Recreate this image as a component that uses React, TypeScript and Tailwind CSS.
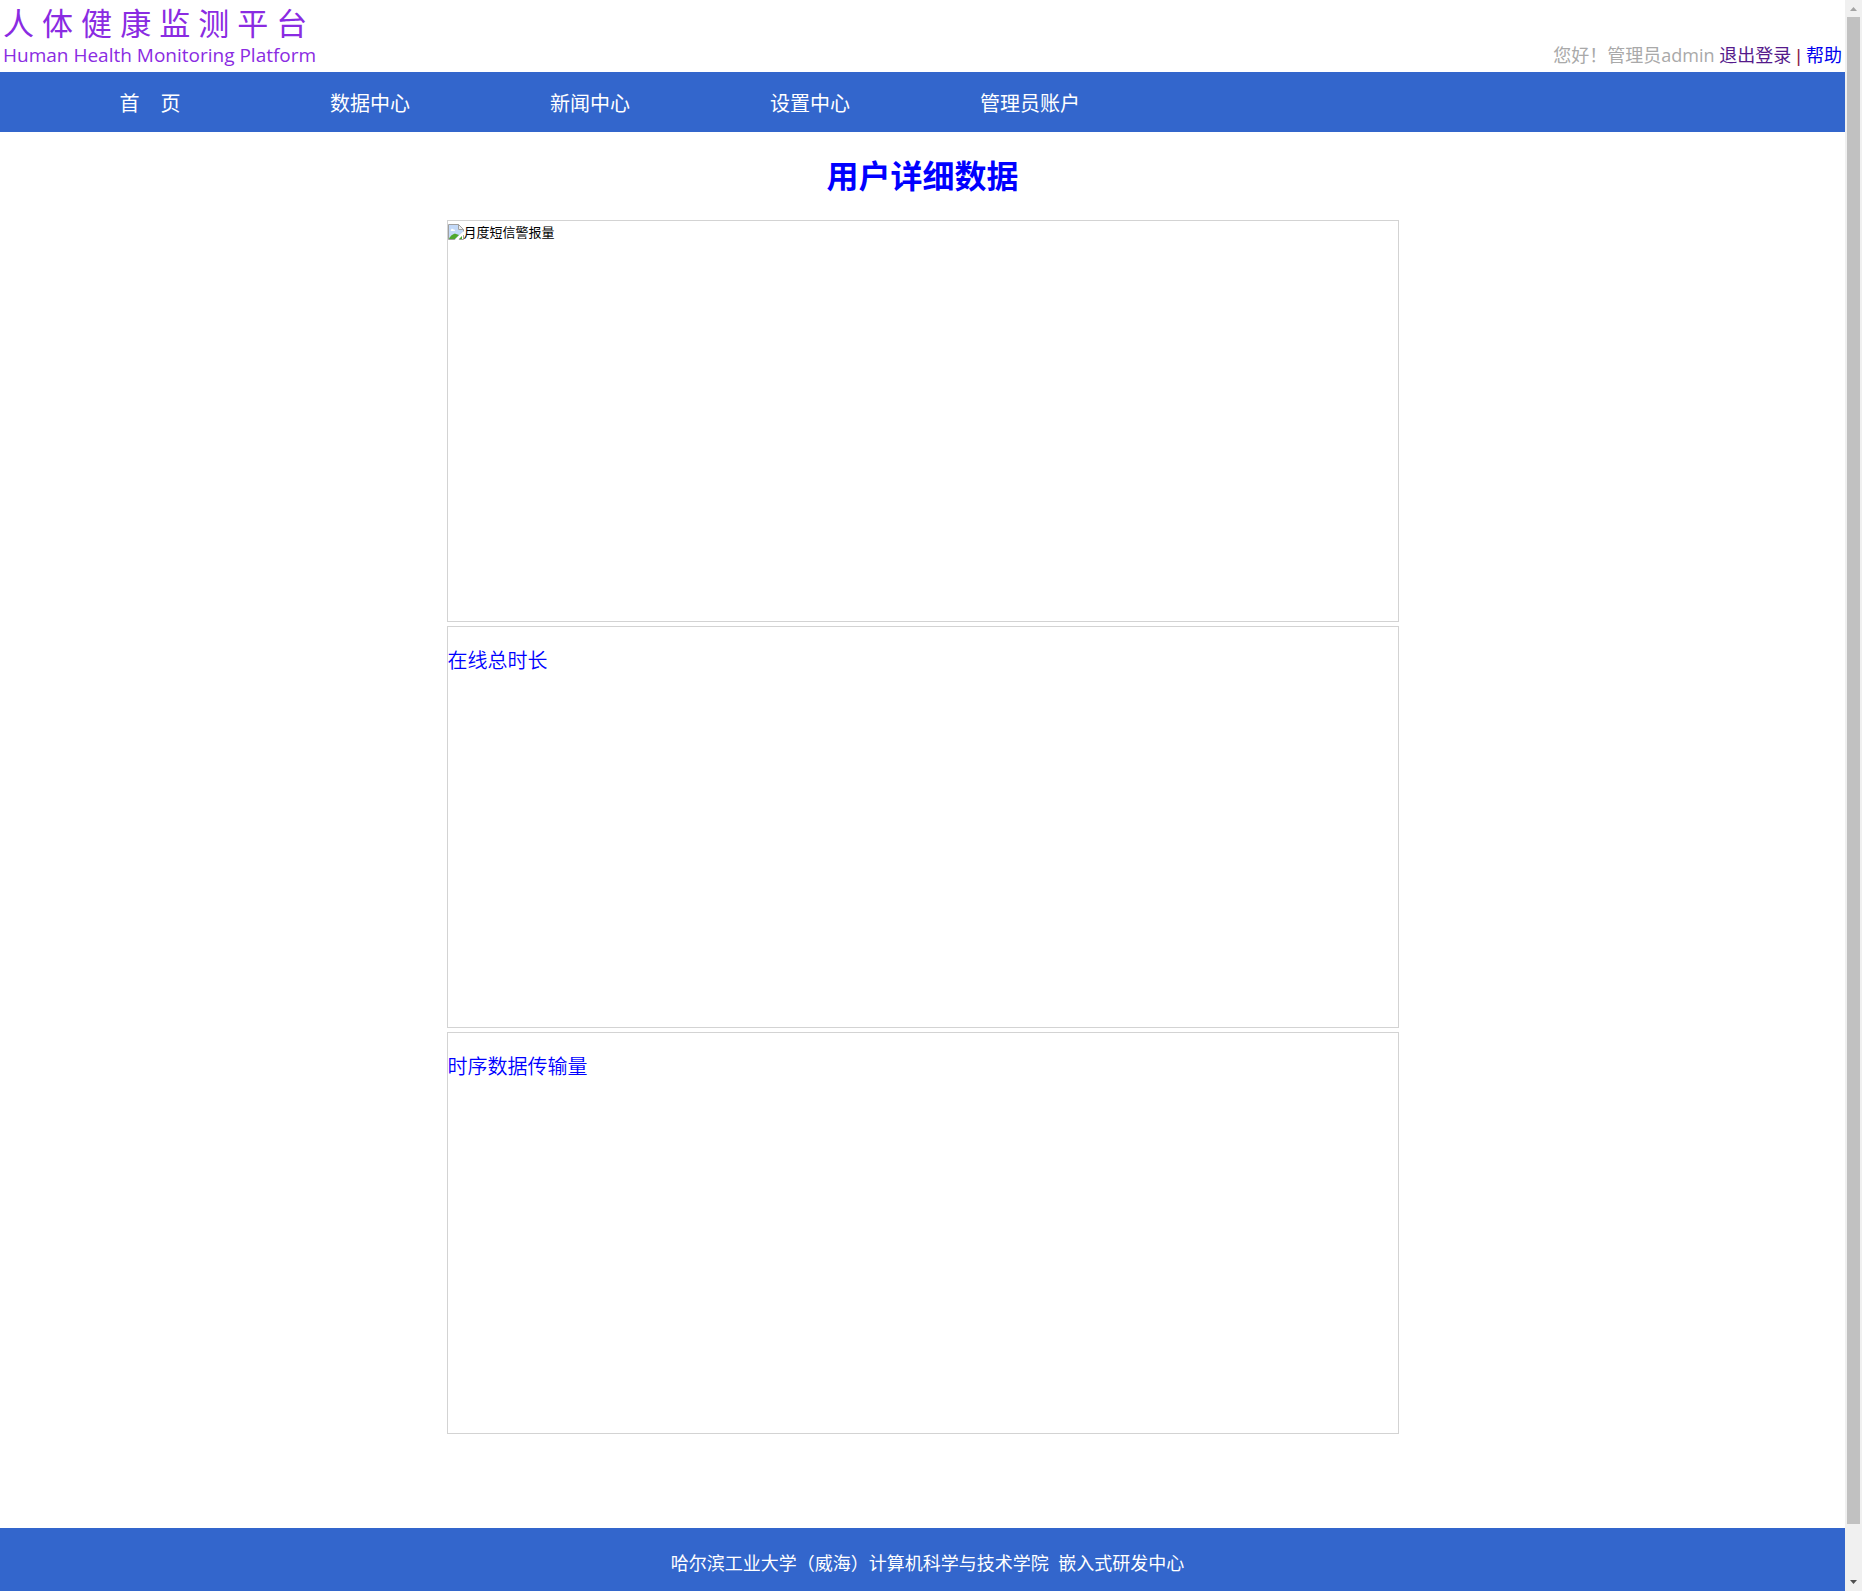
const NAV_ITEMS = ['首\u00a0\u00a0\u00a0\u00a0页', '数据中心', '新闻中心', '设置中心', '管理员账户'];

function BrokenImageIcon() {
  return (
    <svg className="size-4 shrink-0" viewBox="0 0 16 16" aria-hidden="true">
      <path d="M0.5 0.5H10.5L15.5 5.5V15.5H0.5Z" fill="#fff" stroke="#a0a0a0" />
      <path d="M1 1H10V6H15V8L8 15H1Z" fill="#c3d9f8" />
      <path d="M3 6C3 4.500 5 4.500 5.500 5.500C7 5 7.500 7 6.500 7H3.500C2.500 7 2.500 6 3 6Z" fill="#fff" />
      <path d="M1 15C2 12 6 9 8 10L11 11L7 15Z" fill="#4ea72e" />
      <path d="M10.500 0.500V5.500H15.500Z" fill="#eee" stroke="#a0a0a0" />
      <path d="M6.500 16L16 7V10.500L10.500 16Z" fill="#fff" />
      <path d="M11 15L14 12V15Z" fill="#4ea72e" />
    </svg>
  );
}

function Header() {
  return (
    <header className="flex h-[72px] items-end justify-between px-[3px] pb-1">
      <div className="text-[#8a2be2]">
        <p className="text-[31px] leading-[38px]">人 体 健 康 监 测 平 台</p>
        <p className="text-[19px] leading-[26px]">Human Health Monitoring Platform</p>
      </div>
      <p className="text-lg leading-6 text-[#a9a9a9]">
        您好！管理员admin{' '}
        <a href="#logout" className="text-[#551a8b]">退出登录</a>
        <span className="font-['Liberation_Sans',sans-serif] text-[#8b1a4b]"> | </span>
        <a href="#help" className="text-[#0000ee]">帮助</a>
      </p>
    </header>
  );
}

function Nav() {
  return (
    <nav className="h-[60px] bg-[#3366cc] pt-1 pl-10">
      <ul className="flex">
        {NAV_ITEMS.map((item) => (
          <li key={item} className="w-[220px] text-center text-xl leading-[56px] text-white">
            <a href="#nav">{item}</a>
          </li>
        ))}
      </ul>
    </nav>
  );
}

function Panel({ title }: { title: string }) {
  return (
    <section className="h-[402px] border border-[#d3d3d3] pt-5">
      <h2 className="text-xl leading-7 font-[350] text-[#0000ff]">{title}</h2>
    </section>
  );
}

function Scrollbar() {
  return (
    <div className="flex w-[17px] shrink-0 flex-col items-center bg-[#f0f0f0]" aria-hidden="true">
      <div className="flex h-[17px] items-center">
        <svg className="h-1 w-[7px]" viewBox="0 0 7 4"><path d="M0 4L3.500 0L7 4Z" fill="#a3a3a3" /></svg>
      </div>
      <div className="w-[13px] grow bg-[#c1c1c1]" />
      <div className="flex h-[67px] items-end pb-[7px]">
        <svg className="h-1 w-[7px]" viewBox="0 0 7 4"><path d="M0 0H7L3.500 4Z" fill="#505050" /></svg>
      </div>
    </div>
  );
}

export default function App() {
  return (
    <div className="flex min-h-screen bg-white font-['Open_Sans','Noto_Sans_CJK_SC',sans-serif]">
      <div className="flex min-w-0 grow flex-col">
        <Header />
        <Nav />
        <main className="grow pb-[94px]">
          <h1 className="py-5 text-center text-[32px] leading-[48px] font-bold text-[#0000ff]">用户详细数据</h1>
          <div className="mx-auto flex max-w-[952px] flex-col gap-1">
            <section className="h-[402px] border border-[#d3d3d3] pt-[3px]">
              <div className="flex items-center text-[13px] leading-4 text-black">
                <BrokenImageIcon />
                <span>月度短信警报量</span>
              </div>
            </section>
            <Panel title="在线总时长" />
            <Panel title="时序数据传输量" />
          </div>
        </main>
        <footer className="h-[63px] bg-[#3366cc] pt-[23px] pl-2.5 text-center text-lg leading-6 text-white">
          哈尔滨工业大学（威海）计算机科学与技术学院&nbsp; 嵌入式研发中心
        </footer>
      </div>
      <Scrollbar />
    </div>
  );
}
